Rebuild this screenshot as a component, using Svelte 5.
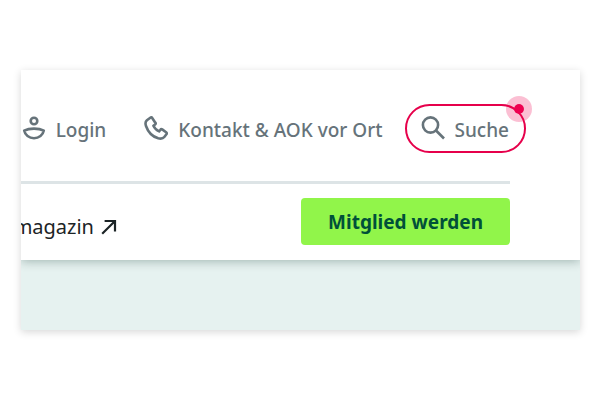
<script lang="ts">
  type MetaLink = { id: string; label: string; href: string }

  const metaLinks: MetaLink[] = [
    { id: 'login', label: 'Login', href: '#login' },
    { id: 'contact', label: 'Kontakt & AOK vor Ort', href: '#kontakt' },
  ]

  let searchOpen = $state(false)
</script>

<main class="page">
  <div class="card">
    <header class="header">
      <nav class="meta" aria-label="Service">
        {#each metaLinks as link (link.id)}
          <a class="meta-item {link.id}" href={link.href}>
            {#if link.id === 'login'}
              <svg class="icon" viewBox="0 0 24 24" aria-hidden="true">
                <circle cx="12" cy="5" r="3.3" />
                <path d="M2.2 14.6C7.2 11.9 16.8 11.9 21.8 14.6C21 19 17 22.2 12 22.2S3 19 2.2 14.6Z" />
              </svg>
            {:else}
              <svg class="icon" viewBox="0 0 24 24" aria-hidden="true">
                <path
                  d="M6.3 1.7L2.9 4.2C1.5 5.4 1.2 7.6 2 10C4 15.8 8.4 20.6 14.2 22.3C16.9 23 19 22.6 20.3 21L22.4 18.3C22.9 17.6 22.8 16.9 22.1 16.3L18.2 13.4C17.5 12.9 16.9 13 16.4 13.7L15.1 15.4C12.6 14.4 10.6 12.4 9.4 9.8L11.1 8.5C11.7 8 11.8 7.3 11.3 6.7L8.2 2C7.7 1.3 7 1.2 6.3 1.7Z"
                />
              </svg>
            {/if}
            <span class="label">{link.label}</span>
          </a>
        {/each}
        <button
          type="button"
          class="meta-item search"
          aria-expanded={searchOpen}
          onclick={() => (searchOpen = !searchOpen)}
        >
          <svg class="icon" viewBox="0 0 24 24" aria-hidden="true">
            <circle cx="9.5" cy="9" r="7.6" />
            <path d="M15 14.5L23 22.5" />
          </svg>
          <span class="label">Suche</span>
          <span class="marker"></span>
        </button>
      </nav>

      <div class="main-row">
        <a class="magazine" href="#magazin">
          <span>magazin</span>
          <svg class="arrow" viewBox="0 0 16 16" aria-hidden="true">
            <path d="M1.2 14.8L14 2M3.6 2H14V12.4" />
          </svg>
        </a>
        <button type="button" class="cta">Mitglied werden</button>
      </div>
    </header>
    <div class="stage"></div>
  </div>
</main>

<style>
  :global(body) {
    background: #fff;
  }

  .page {
    padding: 70px 20px 60px 21px;
  }

  .card {
    overflow: hidden;
    background: #e6f2f0;
    box-shadow: 0 2px 8px rgba(0, 0, 0, 0.16);
    font-family: 'Noto Sans', sans-serif;
    font-size: 20px;
    line-height: 28px;
  }

  .header {
    padding-top: 34px;
    background: #fff;
    box-shadow: 0 1px 10px rgba(0, 40, 35, 0.32);
  }

  .meta {
    display: flex;
    align-items: center;
    justify-content: flex-end;
    margin-right: 70px;
    padding-bottom: 28px;
    border-bottom: 3px solid #dde4e6;
    font-size: 19px;
    font-weight: 500;
  }

  .meta-item {
    display: flex;
    flex-shrink: 0;
    align-items: center;
    gap: 10px;
    color: #66737a;
    text-decoration: none;
    white-space: nowrap;
  }

  .label {
    padding-top: 3px;
  }

  .login {
    margin-right: 38px;
  }

  .contact {
    margin-right: 23px;
  }

  .search {
    position: relative;
    gap: 9px;
    margin-right: -16px;
    padding: 7px 15px 7px 14px;
    border: 2px solid #e6004b;
    border-radius: 25px;
    background: transparent;
    font: inherit;
    cursor: pointer;
  }

  .icon {
    width: 24px;
    height: 24px;
    margin-bottom: 2px;
    fill: none;
    stroke: currentColor;
    stroke-width: 2.6;
    stroke-linejoin: round;
  }

  .marker {
    position: absolute;
    top: -10px;
    right: -8px;
    width: 10px;
    height: 10px;
    border: 8px solid rgba(238, 0, 80, 0.25);
    border-radius: 50%;
    background: #ee0050;
    background-clip: padding-box;
  }

  .main-row {
    display: flex;
    align-items: center;
    justify-content: space-between;
    margin-right: 70px;
    padding: 14px 0 15px;
  }

  /* the label runs in from beyond the left edge */
  .magazine {
    display: flex;
    align-items: center;
    justify-content: flex-end;
    gap: 7px;
    width: 96px;
    padding-top: 10px;
    color: #1c2426;
    text-decoration: none;
  }

  .arrow {
    flex-shrink: 0;
    width: 16px;
    height: 16px;
    fill: none;
    stroke: currentColor;
    stroke-width: 2.2;
  }

  .cta {
    padding: 10px 27px 9px;
    border: 0;
    border-radius: 4px;
    background: #91f54a;
    color: #005039;
    font: inherit;
    font-size: 19px;
    font-weight: 700;
    cursor: pointer;
  }

  .stage {
    height: 70px;
  }
</style>
